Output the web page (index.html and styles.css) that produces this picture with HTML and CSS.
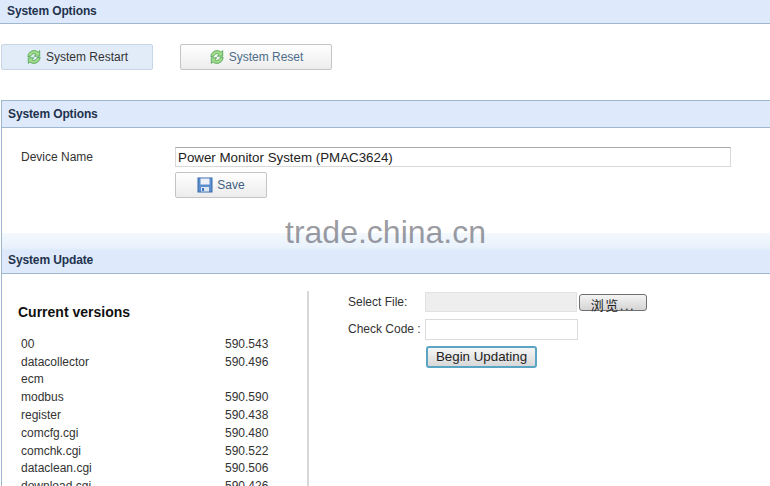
FILE: index.html
```html
<!DOCTYPE html>
<html lang="en">
<head>
  <meta charset="UTF-8">
  <title>System Options</title>
  <link rel="stylesheet" href="styles.css">
</head>
<body>
  <svg class="defs" width="0" height="0">
    <symbol id="refresh" viewBox="0 0 16 16">
      <path d="M1.8 7.6C2.2 4 5 1.6 8.2 1.6c1.6 0 2.9.6 3.9 1.5l1.6-1.5v5.6H8.2l1.9-1.9c-.5-.5-1.2-.7-1.9-.7-1.7 0-3 1.1-3.4 2.6z" fill="#a4dc8c" stroke="#46a04e" stroke-width=".8"/>
      <path d="M14.2 8.4c-.4 3.6-3.2 6-6.4 6-1.6 0-2.9-.6-3.9-1.5l-1.6 1.5V8.8h5.5l-1.9 1.9c.5.5 1.2.7 1.9.7 1.7 0 3-1.1 3.4-3z" fill="#a4dc8c" stroke="#46a04e" stroke-width=".8"/>
    </symbol>
  </svg>

  <div class="bar bar-top"><span>System Options</span></div>

  <div class="actions">
    <button class="btn btn-active"><svg class="icon"><use href="#refresh"/></svg>System Restart</button>
    <button class="btn btn-blue"><svg class="icon"><use href="#refresh"/></svg>System Reset</button>
  </div>

  <div class="panel">
    <div class="bar bar-mid"><span>System Options</span></div>
    <div class="device-form">
      <label class="device-label">Device Name</label>
      <div class="device-fields">
        <input class="device-input" type="text" value="Power Monitor System (PMAC3624)">
        <button class="btn btn-save">
          <svg class="icon" viewBox="0 0 16 16">
            <rect x="1" y="1" width="14" height="14" fill="#5b8fd0" stroke="#3a6aa8"/>
            <rect x="3.5" y="1.5" width="9" height="6" fill="#eef2f8"/>
            <rect x="4" y="10" width="8" height="4.5" fill="#dfe6f0"/>
            <rect x="5" y="11" width="2" height="3" fill="#3d78c4"/>
          </svg>Save
        </button>
      </div>
    </div>

    <div class="bar bar-fade"><span>System Update</span></div>
    <div class="update">
      <div class="versions">
        <h3>Current versions</h3>
        <table>
          <tr><td>00</td><td>590.543</td></tr>
          <tr><td>datacollector</td><td>590.496</td></tr>
          <tr><td>ecm</td><td></td></tr>
          <tr><td>modbus</td><td>590.590</td></tr>
          <tr><td>register</td><td>590.438</td></tr>
          <tr><td>comcfg.cgi</td><td>590.480</td></tr>
          <tr><td>comchk.cgi</td><td>590.522</td></tr>
          <tr><td>dataclean.cgi</td><td>590.506</td></tr>
          <tr><td>download.cgi</td><td>590.426</td></tr>
        </table>
      </div>
      <div class="upload">
        <div class="upload-row upload-row-file">
          <label>Select File:</label>
          <div class="file-box"></div>
          <button class="browse">浏览...</button>
        </div>
        <div class="upload-row">
          <label>Check Code :</label>
          <input class="code-input" type="text">
        </div>
        <button class="begin">Begin Updating</button>
      </div>
    </div>
  </div>

  <div class="watermark">trade.china.cn</div>
</body>
</html>
```

FILE: styles.css
```css
html, body {
  height: 486px;
}

body {
  margin: 0;
  position: relative;
  overflow: hidden;
  background-color: #fff;
  font-family: "Liberation Sans", Arial, sans-serif;
  font-size: 12px;
  color: #333;
}

.defs {
  position: absolute;
}

.bar {
  display: flex;
  align-items: center;
  background-color: #deeafb;
  border-bottom: 1px solid #9db8cf;
  font-weight: bold;
  letter-spacing: -0.12px;
  color: #22324d;
}

.bar-top {
  height: 21px;
  padding: 0 0 2px 7px;
}

.bar-mid {
  height: 26px;
  padding-left: 6px;
  border-top: 1px solid #9db8cf;
}

.bar-fade {
  height: 26px;
  padding-left: 6px;
  padding-top: 14px;
  background: linear-gradient(#f3f8fd 0, #e8f1fb 15px, #deeafb 17px);
}

.btn {
  display: flex;
  align-items: center;
  justify-content: center;
  gap: 4px;
  height: 26px;
  padding: 0;
  box-sizing: border-box;
  border: 1px solid #c4c4c4;
  border-radius: 2px;
  background: linear-gradient(#fff, #ececec);
  font-family: inherit;
  font-size: 12px;
  color: #333;
}

.icon {
  width: 16px;
  height: 16px;
}

.actions {
  display: flex;
  gap: 27px;
  padding: 20px 0 30px 1px;
}

.actions .btn {
  width: 152px;
}

.btn-active {
  background: #e2ecf8;
  border-color: #c6d6e6;
}

.btn-blue {
  color: #4d6d8a;
}

.panel {
  margin-left: 1px;
  border-left: 1px solid #9db8cf;
}

.device-form {
  display: flex;
  height: 105px;
  box-sizing: border-box;
  padding: 19px 0 0 19px;
}

.device-label {
  width: 154px;
  padding-top: 3px;
}

.device-fields {
  display: flex;
  flex-direction: column;
  align-items: flex-start;
  gap: 5px;
}

.device-input {
  width: 556px;
  height: 20px;
  box-sizing: border-box;
  padding: 0 2px;
  border: 1px solid #d8d8d8;
  border-top-color: #a8a8a8;
  font-family: inherit;
  font-size: 13.33px;
  color: #222;
}

.btn-save {
  width: 92px;
  color: #3f5f80;
}

.update {
  display: flex;
  padding-top: 17px;
}

.versions {
  width: 289px;
  height: 195px;
  padding-left: 16px;
  border-right: 2px solid #d8d8d8;
}

.versions h3 {
  margin: 13px 0 15px;
  font-size: 14px;
  color: #111;
}

.versions table {
  border-collapse: collapse;
  margin-left: 3px;
}

.versions td {
  height: 17.8px;
  padding: 0;
}

.versions td:first-child {
  width: 204px;
}

.upload {
  padding: 1px 0 0 39px;
  display: flex;
  flex-direction: column;
  align-items: flex-start;
}

.upload-row {
  display: flex;
  align-items: center;
  height: 26px;
}

.upload-row-file {
  height: 20px;
  margin-bottom: 4px;
}

.upload-row label {
  width: 77px;
}

.file-box {
  width: 150px;
  height: 18px;
  background-color: #eee;
  border: 1px solid #e2e2e2;
}

.browse {
  width: 68px;
  height: 17px;
  margin-left: 2px;
  padding: 0;
  border: 1px solid #707070;
  border-radius: 3px;
  background: linear-gradient(#f4f4f4, #d4d4d4);
  font-family: "Liberation Sans", "Noto Sans CJK SC", sans-serif;
  font-size: 13px;
  letter-spacing: 1.5px;
  color: #222;
}

.code-input {
  width: 153px;
  height: 21px;
  box-sizing: border-box;
  border: 1px solid #dcdcdc;
}

.begin {
  width: 111px;
  height: 22px;
  margin: 4px 0 0 78px;
  padding: 0 0 2px;
  border: 2px solid #5aa5c4;
  border-radius: 3px;
  background: linear-gradient(#f6f6f6, #d8d8d8);
  font-family: inherit;
  font-size: 13.33px;
  color: #222;
}

.watermark {
  position: absolute;
  left: 285px;
  top: 214px;
  font-size: 32px;
  color: rgba(110, 110, 120, 0.7);
}
```
